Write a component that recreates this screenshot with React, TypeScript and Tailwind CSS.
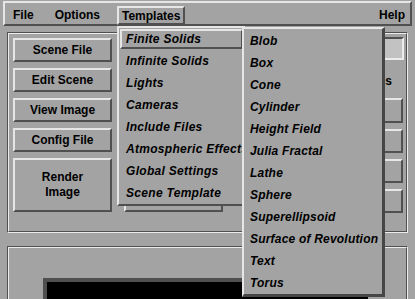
import React from 'react';

const raised = 'border-2 border-t-[#e6e6e6] border-l-[#e6e6e6] border-b-[#505050] border-r-[#505050]';

const Etched: React.FC<{ className?: string; children?: React.ReactNode }> = ({ className, children }) => (
    <div className={`border border-t-[#505050] border-l-[#505050] border-b-[#ececec] border-r-[#ececec] ${className ?? ''}`}>
        <div className="h-full border border-t-[#ececec] border-l-[#ececec] border-b-[#505050] border-r-[#505050]">
            {children}
        </div>
    </div>
);

const Button: React.FC<{ className?: string; children?: React.ReactNode }> = ({ className, children }) => (
    <div className={`${raised} flex items-center justify-center text-center leading-[15px] ${className ?? ''}`}>
        {children}
    </div>
);

const templates = ['Finite Solids', 'Infinite Solids', 'Lights', 'Cameras', 'Include Files', 'Atmospheric Effects', 'Global Settings', 'Scene Template'];
const solids = ['Blob', 'Box', 'Cone', 'Cylinder', 'Height Field', 'Julia Fractal', 'Lathe', 'Sphere', 'Superellipsoid', 'Surface of Revolution', 'Text', 'Torus'];

export default function App() {
    return (
        <div className="relative w-[415px] h-[299px] overflow-hidden bg-[#a3a3a3] font-['Liberation_Sans',Arial,sans-serif] text-[12px] font-bold text-black">

            {/* Menu bar */}
            <div className={`mx-[3px] mt-px h-[25px] ${raised} flex items-center`}>
                <span className="ml-[8px] mt-[2px]">File</span>
                <span className="ml-[21px] mt-[2px]">Options</span>
                <span className={`ml-[17px] mt-[4px] h-[19px] px-[3px] ${raised} flex items-center`}>Templates</span>
                <span className="ml-auto mr-[5px] mt-[2px]">Help</span>
            </div>

            {/* Upper panel */}
            <Etched className="mx-[7px] mt-[6px] h-[201px]">
                <div className="flex h-full pl-[4px] pt-[4px] pr-[2px]">
                    <div className="flex w-[99px] flex-col gap-[6px]">
                        <Button className="h-[24px]">Scene File</Button>
                        <Button className="h-[24px]">Edit Scene</Button>
                        <Button className="h-[24px]">View Image</Button>
                        <Button className="h-[24px]">Config File</Button>
                        <Button className="h-[54px]">Render<br />Image</Button>
                    </div>
                    {/* mostly covered by the open menus */}
                    <div className="ml-[12px] flex-1">
                        <Button className="mt-[149px] h-[25px] w-[99px]" />
                    </div>
                    <div className="flex w-[100px] flex-col">
                        <div className="mt-[-1px] h-[23px] border-2 border-t-[#505050] border-l-[#505050] border-b-[#ececec] border-r-[#ececec] bg-[#c2c2c2]" />
                        <div className="flex h-[38px] items-center justify-end pr-[12px] pt-[3px]">Options</div>
                        <div className="flex flex-col gap-[6px] pr-px">
                            <Button className="h-[25px]" />
                            <Button className="h-[24px]" />
                            <Button className="h-[24px]" />
                            <Button className="h-[24px]" />
                        </div>
                    </div>
                </div>
            </Etched>

            {/* Lower panel */}
            <Etched className="mx-[7px] mt-[13px] h-[80px]">
                <div className="pl-[34px] pt-[30px]">
                    <div className="h-[60px] w-[325px] border-t-4 border-l-4 border-[#505050] bg-black" />
                </div>
            </Etched>

            {/* Templates menu */}
            <div className={`absolute left-[117px] top-[26px] w-[129px] ${raised} bg-[#a3a3a3] italic tracking-[0.3px]`}>
                {templates.map((t, i) =>
                    i === 0 ? (
                        <div key={t} className="h-[22px] p-px">
                            <div className={`flex h-full items-center whitespace-nowrap pl-[4px] ${raised}`}>{t}</div>
                        </div>
                    ) : (
                        <div key={t} className="flex h-[22px] items-center whitespace-nowrap pl-[7px]">{t}</div>
                    )
                )}
            </div>

            {/* Finite Solids submenu */}
            <div className="absolute left-[242px] top-[27px] h-[270px] w-[143px] border-t-2 border-l-2 border-b-[3px] border-r-[3px] border-t-[#e6e6e6] border-l-[#e6e6e6] border-b-[#464646] border-r-[#464646] bg-[#a3a3a3] pt-px italic tracking-[0.2px]">
                {solids.map(s => (
                    <div key={s} className="flex h-[22px] items-center whitespace-nowrap pl-[6px]">{s}</div>
                ))}
            </div>
        </div>
    );
}
